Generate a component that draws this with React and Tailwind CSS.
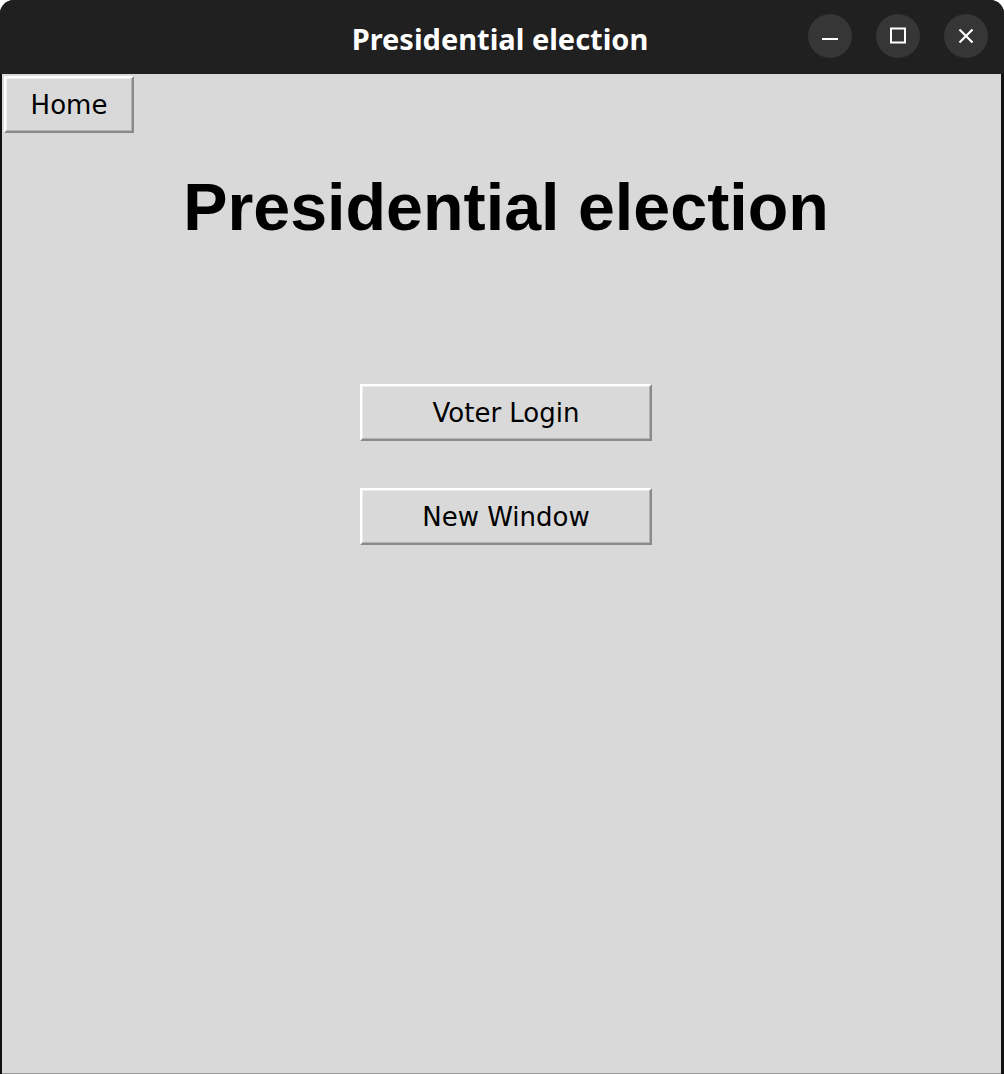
import React from 'react'

function TkButton({ children, className = '' }) {
  return (
    <button
      className={`flex items-center justify-center bg-[#d9d9d9] border-2 border-t-white border-l-white border-b-[#8a8a8a] border-r-[#8a8a8a] shadow-[inset_-1px_-1px_0_#b4b4b4,inset_1px_1px_0_#ececec] text-[26px] leading-none text-black font-['DejaVu_Sans',sans-serif] ${className}`}
    >
      {children}
    </button>
  )
}

function TitleButton({ children }) {
  return (
    <div className="w-[44px] h-[44px] rounded-full bg-[#363636] flex items-center justify-center">
      {children}
    </div>
  )
}

export default function App() {
  return (
    <div className="w-[1004px] h-[1074px] bg-[#111] rounded-t-[14px] overflow-hidden flex flex-col">
      {/* title bar */}
      <div className="h-[74px] shrink-0 bg-[#202020] relative flex items-center justify-center">
        <span className="text-white font-bold text-[29px] leading-none font-['Noto_Sans',sans-serif] pt-[2px] pr-[4px]">
          Presidential election
        </span>
        <div className="absolute right-[16px] top-[14px] flex gap-[24px]">
          <TitleButton>
            <svg width="18" height="18" viewBox="0 0 18 18">
              <rect x="1" y="11" width="16" height="2" fill="#fff" />
            </svg>
          </TitleButton>
          <TitleButton>
            <svg width="18" height="18" viewBox="0 0 18 18">
              <rect x="2" y="1.5" width="14" height="14" fill="none" stroke="#fff" strokeWidth="2" />
            </svg>
          </TitleButton>
          <TitleButton>
            <svg width="18" height="18" viewBox="0 0 18 18">
              <path d="M2.5 2.5 L15.5 15.5 M15.5 2.5 L2.5 15.5" stroke="#fff" strokeWidth="2.2" />
            </svg>
          </TitleButton>
        </div>
      </div>

      {/* content */}
      <div className="flex-1 bg-[#d9d9d9] ml-[2px] mr-[3px] border-b border-[#9a9a9a] flex flex-col">
        <TkButton className="ml-[2px] mt-[2px] w-[130px] h-[57px]">Home</TkButton>

        <h1 className="mt-[41px] text-center text-[66.4px] leading-none font-bold text-black font-['Liberation_Sans',Arial,sans-serif] pl-[9px]">
          Presidential election
        </h1>

        <div className="mt-[144px] flex flex-col items-center gap-[47px] pl-[9px]">
          <TkButton className="w-[292px] h-[57px]">Voter Login</TkButton>
          <TkButton className="w-[292px] h-[57px]">New Window</TkButton>
        </div>
      </div>
    </div>
  )
}
